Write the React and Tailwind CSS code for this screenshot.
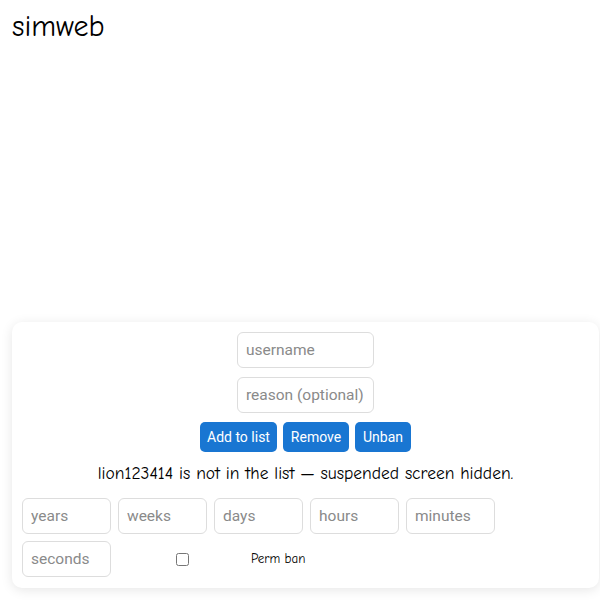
export default function App() {
  const comic = { fontFamily: '"Comic Sans MS", "Comic Neue", cursive' };
  const inputCls =
    "h-[36px] rounded-[6px] border border-[#dddddd] bg-white px-[8px] text-[15.5px] text-[#333] placeholder:text-[#8a8a8a] outline-none font-['Roboto',sans-serif]";
  const btnCls =
    "h-[30px] whitespace-nowrap rounded-[5px] bg-[#1976d2] px-0 text-[14px] text-white font-['Roboto',sans-serif]";
  return (
    <div className="flex h-[600px] flex-col bg-white">
      <h1
        className="pl-[12px] pt-[9px] text-[30px] leading-[36px] text-black"
        style={comic}
      >
        simweb
      </h1>
      <div className="flex-1" />
      <div className="mb-[12px] ml-[12px] w-[587px] rounded-[10px] bg-white px-[10px] pb-[11px] pt-[10px] shadow-[0_2px_12px_rgba(0,0,0,0.10)]">
        <div className="flex flex-col items-center gap-[9px]">
          <input className={`${inputCls} w-[137px]`} placeholder="username" />
          <input className={`${inputCls} w-[137px]`} placeholder="reason (optional)" />
          <div className="flex gap-[6px]">
            <button className={`${btnCls} w-[77px]`}>Add to list</button>
            <button className={`${btnCls} w-[66px]`}>Remove</button>
            <button className={`${btnCls} w-[56px]`}>Unban</button>
          </div>
        </div>
        <p
          className="mt-[8px] text-center text-[17.5px] leading-[26px] text-black"
          style={comic}
        >
          lion123414 is not in the list — suspended screen hidden.
        </p>
        <div className="mt-[12px] flex gap-[7px]">
          {["years", "weeks", "days", "hours", "minutes"].map((p) => (
            <input key={p} className={`${inputCls} w-[89px]`} placeholder={p} />
          ))}
        </div>
        <div className="mt-[7px] flex items-center">
          <input className={`${inputCls} w-[89px]`} placeholder="seconds" />
          <input
            type="checkbox"
            className="ml-[65px] h-[13px] w-[13px] accent-[#1976d2]"
          />
          <span className="ml-[62px] text-[13px] text-black" style={comic}>
            Perm ban
          </span>
        </div>
      </div>
    </div>
  );
}
